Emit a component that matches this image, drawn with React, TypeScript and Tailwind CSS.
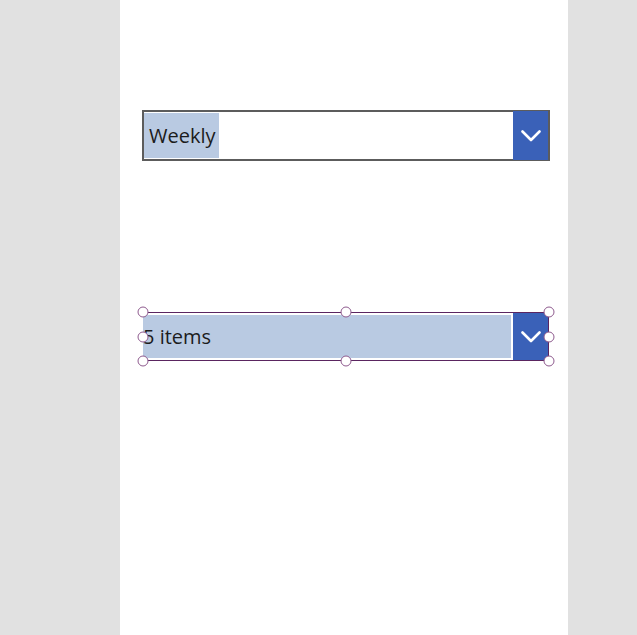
import React from 'react';

const font = { fontFamily: '"Open Sans", "Noto Sans", sans-serif' };

function Chevron() {
  return (
    <svg width="20" height="12" viewBox="0 0 20 12" fill="none">
      <path d="M1.5 1.5 L10 10 L18.5 1.5" stroke="white" strokeWidth="2.6" strokeLinecap="round" strokeLinejoin="round" />
    </svg>
  );
}

function Handle({ className }: { className: string }) {
  return (
    <span
      className={`absolute w-[11px] h-[11px] rounded-full bg-white border-[1.5px] border-[#8e5a8e] -translate-x-1/2 -translate-y-1/2 ${className}`}
    />
  );
}

export default function App() {
  return (
    <div className="min-h-screen h-[635px] bg-[#e1e1e1] flex" style={font}>
      <div className="ml-[120px] w-[448px] h-full bg-white flex flex-col pl-[22px] pr-[18px]">
        {/* Frequency dropdown */}
        <div className="mt-[110px] h-[51px] w-[408px] border-2 border-[#5c5c5c] flex items-stretch">
          <div className="flex-1 flex items-stretch py-[1px]">
            <span className="bg-[#b9cae2] pl-[5px] pr-[3px] flex items-center text-[20px] text-[#1c1c1c] leading-none">
              Weekly
            </span>
          </div>
          <div className="w-[35px] bg-[#3a61b8] flex items-center justify-center -my-[1px]">
            <Chevron />
          </div>
        </div>

        {/* Selected combo box */}
        <div className="mt-[151px] ml-[1px] relative h-[49px] w-[406px] border border-[#5a2560] flex items-stretch p-[1px]">
          <div className="flex-1 flex items-stretch py-[1px] pr-[2px]">
            <div className="flex-1 bg-[#b9cae2] flex items-center text-[20px] text-[#1c1c1c] leading-none -ml-[2px]">
              5 items
            </div>
          </div>
          <div className="w-[35px] bg-[#3a61b8] flex items-center justify-center -my-[1px] -mr-[1px]">
            <Chevron />
          </div>
          <div className="absolute -inset-[1px] pointer-events-none">
            <Handle className="left-0 top-0" />
            <Handle className="left-1/2 top-0" />
            <Handle className="left-full top-0" />
            <Handle className="left-0 top-1/2" />
            <Handle className="left-full top-1/2" />
            <Handle className="left-0 top-full" />
            <Handle className="left-1/2 top-full" />
            <Handle className="left-full top-full" />
          </div>
        </div>
      </div>
    </div>
  );
}
